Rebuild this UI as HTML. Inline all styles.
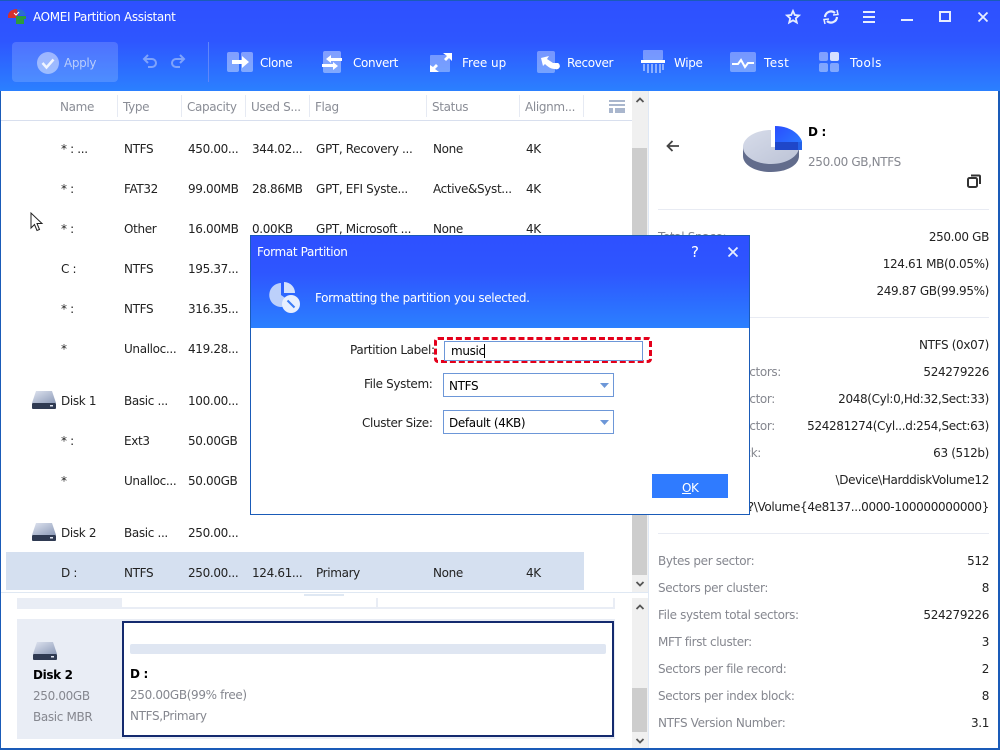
<!DOCTYPE html>
<html><head><meta charset="utf-8"><style>
*{box-sizing:border-box}
html,body{margin:0;padding:0;width:1000px;height:750px;overflow:hidden;background:#fff}
body{position:relative;font:12px/16px "DejaVu Sans","Liberation Sans",sans-serif;letter-spacing:-.35px;color:#222}
.t{position:absolute;white-space:nowrap;margin-top:1px}
.a{position:absolute}
.w{color:#fff}
.h{color:#8a8d96;margin-top:0}
.g{color:#85878f}
.n{margin-top:0}
.r{position:absolute;white-space:nowrap;right:11px;margin-top:1px}
svg{position:absolute;overflow:visible}
</style></head><body>
<div class="a" style="left:0;top:0;width:1000px;height:750px;border:1px solid #1a5bb8;border-width:1px 2px 2px 1px"></div>
<div class="a" style="left:0;top:0;width:1000px;height:91px;background:linear-gradient(#2e50ff 0,#2e56ff 45%,#2b80ff 100%);border-top:1px solid #1a5bb8"></div>
<div class="a" style="left:0;top:91px;width:1px;height:659px;background:#1a5bb8"></div>

<svg style="left:7px;top:8px" width="20" height="17" viewBox="0 0 20 17"><path d="M1 7C2 3 6 1 10 1l1 6-2 3-4 0H1z" fill="#d5302f"/><path d="M10 1c4 0 8 2 9 6h-7z" fill="#2b6fcf"/><path d="M9 8h10v3h-2v5H9z" fill="#2c9a3f"/><path d="M7 5l2 2 3-3" stroke="#fff" fill="none"/></svg>
<span class="t w" style="left:33px;top:8px">AOMEI Partition Assistant</span>

<div class="a" style="left:12px;top:42px;width:106px;height:40px;background:rgba(255,255,255,.16);border-radius:4px"></div>
<svg style="left:37px;top:52px" width="22" height="22"><circle cx="11" cy="11" r="11" fill="#fff" fill-opacity=".45"/><path d="M5.500 11l4 4.500 7-8" stroke="#fff" stroke-opacity=".85" stroke-width="2.500" fill="none"/></svg>
<span class="t" style="left:64px;top:54px;color:#b9cdfb">Apply</span>
<svg style="left:142px;top:54px" width="44" height="14" fill="none" stroke="#7fa3fb" stroke-width="2"><path d="M2 5h8a4 4 0 0 1 0 8H6M6 1L2 5l4 4"/><path d="M42 5h-8a4 4 0 0 0 0 8h4M38 1l4 4-4 4"/></svg>
<div class="a" style="left:208px;top:42px;width:1px;height:40px;background:#5f86fb"></div>

<svg style="left:227px;top:52px" width="26" height="20"><rect width="12" height="20" rx="2" fill="#fff" fill-opacity=".4"/><rect x="14" width="12" height="20" rx="2" fill="#fff" fill-opacity=".4"/><path d="M5 8h10V4l7 6-7 6v-4H5z" fill="#fff"/></svg>
<span class="t w" style="left:260px;top:54px">Clone</span>
<svg style="left:322px;top:51px" width="20" height="22"><rect x="1" width="18" height="22" rx="2" fill="#fff" fill-opacity=".4"/><path d="M20 7H9V4L4 8l5 4V10h11zM0 16h11v3l5-4-5-4v2H0z" fill="#fff"/></svg>
<span class="t w" style="left:353px;top:54px">Convert</span>
<svg style="left:430px;top:53px" width="22" height="19"><rect y="2" width="20" height="17" rx="1" fill="#fff" fill-opacity=".35"/><path d="M13 0h9v8l-3-3-3 3-2-2 3-3zM9 19H0v-7l3 2 3-3 2 2-3 3z" fill="#fff"/></svg>
<span class="t w" style="left:462px;top:54px;letter-spacing:-.05px">Free up</span>
<svg style="left:537px;top:51px" width="22" height="22"><rect width="18" height="22" rx="2" fill="#fff" fill-opacity=".35"/><path d="M4 7l8-2-2 3 6 4h5a3 3 0 0 1-3 6c-4 0-7-2-10-5l-2 2z" fill="#fff"/></svg>
<span class="t w" style="left:567px;top:54px">Recover</span>
<svg style="left:641px;top:50px" width="24" height="24"><rect x="2" width="20" height="10" rx="1" fill="#fff" fill-opacity=".35"/><rect y="10" width="24" height="3" fill="#fff"/><path d="M3 14v7M7 14v9M11 14v9M15 14v9M19 14v9M22 14v6" stroke="#fff" stroke-opacity=".45" stroke-width="2"/></svg>
<span class="t w" style="left:674px;top:54px">Wipe</span>
<svg style="left:730px;top:52px" width="26" height="20"><rect width="26" height="20" rx="2" fill="#fff" fill-opacity=".35"/><path d="M2 12h6l3-4 4 7 3-4h6" stroke="#fff" stroke-width="2" fill="none"/></svg>
<span class="t w" style="left:764px;top:54px;letter-spacing:.4px">Test</span>
<svg style="left:819px;top:52px" width="20" height="20" fill="#fff"><rect width="9" height="9" rx="2" fill-opacity=".4"/><rect x="11" width="9" height="9" rx="2" fill-opacity=".8"/><rect y="11" width="9" height="9" rx="2" fill-opacity=".4"/><rect x="11" y="11" width="9" height="9" rx="2" fill-opacity=".4"/></svg>
<span class="t w" style="left:850px;top:54px;letter-spacing:.45px">Tools</span>

<svg style="left:786px;top:10px" width="14" height="14"><path d="M7 1l1.800 4 4.200.4-3.200 2.900 1 4.200L7 10.300 3.200 12.500l1-4.200L1 5.400 5.200 5z" fill="none" stroke="#e6edff" stroke-width="1.800"/></svg>
<svg style="left:823px;top:9px" width="16" height="16" fill="none" stroke="#e6edff" stroke-width="2.200"><path d="M2 8a6 6 0 0 1 10-4M14 8a6 6 0 0 1-10 4"/><path d="M10 6l5-.5L14 1M6 10l-5 .5L2 15" stroke-width="1.500"/></svg>
<svg style="left:863px;top:11px" width="12" height="12" fill="#e6edff"><rect width="12" height="2"/><rect y="5" width="12" height="2"/><rect y="10" width="12" height="2"/></svg>
<div class="a" style="left:901px;top:19px;width:12px;height:2px;background:#e6edff"></div>
<div class="a" style="left:939px;top:11px;width:12px;height:11px;border:2px solid #e6edff"></div>
<svg style="left:978px;top:12px" width="10" height="10"><path d="M.5.5l9 9M9.500.5l-9 9" stroke="#e6edff" stroke-width="1.800"/></svg>

<!-- list header -->
<div class="a" style="left:1px;top:120px;width:631px;height:1px;background:#d8dfee"></div>
<span class="t h" style="left:60px;top:99px">Name</span><span class="t h" style="left:123px;top:99px">Type</span><span class="t h" style="left:187px;top:99px">Capacity</span><span class="t h" style="left:251px;top:99px">Used S...</span><span class="t h" style="left:315px;top:99px">Flag</span><span class="t h" style="left:432px;top:99px">Status</span><span class="t h" style="left:525px;top:99px">Alignm...</span>
<div class="a" style="left:117px;top:95px;width:1px;height:22px;background:#e6eaf3"></div><div class="a" style="left:181px;top:95px;width:1px;height:22px;background:#e6eaf3"></div><div class="a" style="left:245px;top:95px;width:1px;height:22px;background:#e6eaf3"></div><div class="a" style="left:309px;top:95px;width:1px;height:22px;background:#e6eaf3"></div><div class="a" style="left:426px;top:95px;width:1px;height:22px;background:#e6eaf3"></div><div class="a" style="left:519px;top:95px;width:1px;height:22px;background:#e6eaf3"></div><div class="a" style="left:583px;top:95px;width:1px;height:22px;background:#e6eaf3"></div>
<svg style="left:609px;top:100px" width="16" height="13" fill="#a9b6cd"><rect width="16" height="2"/><rect y="4" width="16" height="2"/><rect y="8" width="4" height="5"/><rect x="6" y="8" width="10" height="5"/></svg>

<!-- scrollbars -->
<div class="a" style="left:632px;top:91px;width:16px;height:501px;background:#f0f0f0"></div>
<div class="a" style="left:632px;top:148px;width:15px;height:427px;background:#cdcdcd"></div>
<div class="a" style="left:648px;top:91px;width:1px;height:657px;background:#dfe8f5"></div>
<svg style="left:636px;top:97px" width="8" height="6"><path d="M.5 5L4 1.500 7.500 5" fill="none" stroke="#555" stroke-width="1.800"/></svg>
<svg style="left:636px;top:581px" width="8" height="6"><path d="M.5 1L4 4.500 7.500 1" fill="none" stroke="#555" stroke-width="1.800"/></svg>
<div class="a" style="left:632px;top:598px;width:16px;height:150px;background:#f0f0f0"></div>
<div class="a" style="left:632px;top:688px;width:15px;height:44px;background:#cdcdcd"></div>
<svg style="left:636px;top:604px" width="8" height="6"><path d="M.5 5L4 1.500 7.500 5" fill="none" stroke="#555" stroke-width="1.800"/></svg>
<svg style="left:636px;top:738px" width="8" height="6"><path d="M.5 1L4 4.500 7.500 1" fill="none" stroke="#555" stroke-width="1.800"/></svg>

<!-- selected -->
<div class="a" style="left:6px;top:552px;width:578px;height:38px;background:#d5e0f0"></div>
<div class="a" style="left:1px;top:592px;width:647px;height:1px;background:#dfe8f3"></div>
<div class="a" style="left:304px;top:594px;width:40px;height:2px;background:#dfe8f3"></div>

<!-- rows -->
<span class="t" style="left:61px;top:140px">* : ...</span><span class="t" style="left:124px;top:140px">NTFS</span><span class="t" style="left:188px;top:140px">450.00...</span><span class="t" style="left:252px;top:140px">344.02...</span><span class="t" style="left:316px;top:140px">GPT, Recovery ...</span><span class="t" style="left:433px;top:140px">None</span><span class="t" style="left:526px;top:140px">4K</span>
<span class="t" style="left:61px;top:180px">* :</span><span class="t" style="left:124px;top:180px">FAT32</span><span class="t" style="left:188px;top:180px">99.00MB</span><span class="t" style="left:252px;top:180px">28.86MB</span><span class="t" style="left:316px;top:180px">GPT, EFI Syste...</span><span class="t" style="left:433px;top:180px">Active&amp;Syst...</span><span class="t" style="left:526px;top:180px">4K</span>
<span class="t" style="left:61px;top:220px">* :</span><span class="t" style="left:124px;top:220px">Other</span><span class="t" style="left:188px;top:220px">16.00MB</span><span class="t" style="left:252px;top:220px">0.00KB</span><span class="t" style="left:316px;top:220px">GPT, Microsoft ...</span><span class="t" style="left:433px;top:220px">None</span><span class="t" style="left:526px;top:220px">4K</span>
<span class="t" style="left:61px;top:260px">C :</span><span class="t" style="left:124px;top:260px">NTFS</span><span class="t" style="left:188px;top:260px">195.37...</span>
<span class="t" style="left:61px;top:300px">* :</span><span class="t" style="left:124px;top:300px">NTFS</span><span class="t" style="left:188px;top:300px">316.35...</span>
<span class="t" style="left:61px;top:340px">*</span><span class="t" style="left:124px;top:340px">Unalloc...</span><span class="t" style="left:188px;top:340px">419.28...</span>
<span class="t" style="left:61px;top:392px">Disk 1</span><span class="t" style="left:124px;top:392px">Basic ...</span><span class="t" style="left:188px;top:392px">100.00...</span>
<span class="t" style="left:61px;top:432px">* :</span><span class="t" style="left:124px;top:432px">Ext3</span><span class="t" style="left:188px;top:432px">50.00GB</span>
<span class="t" style="left:61px;top:472px">*</span><span class="t" style="left:124px;top:472px">Unalloc...</span><span class="t" style="left:188px;top:472px">50.00GB</span>
<span class="t" style="left:61px;top:524px">Disk 2</span><span class="t" style="left:124px;top:524px">Basic ...</span><span class="t" style="left:188px;top:524px">250.00...</span>
<span class="t" style="left:61px;top:564px">D :</span><span class="t" style="left:124px;top:564px">NTFS</span><span class="t" style="left:188px;top:564px">250.00...</span><span class="t" style="left:252px;top:564px">124.61...</span><span class="t" style="left:316px;top:564px">Primary</span><span class="t" style="left:433px;top:564px">None</span><span class="t" style="left:526px;top:564px">4K</span>

<svg style="left:32px;top:391px" width="24" height="18"><defs><linearGradient id="d" x1="0" y1="0" x2="1" y2="1"><stop offset="0" stop-color="#dfe4f0"/><stop offset="1" stop-color="#8d9bb8"/></linearGradient></defs><path d="M4 0h16l4 12H0z" fill="url(#d)"/><rect y="12" width="24" height="6" rx="1" fill="#2f3a52"/><rect x="18" y="14" width="3" height="1.500" fill="#dfe4f0"/></svg>
<svg style="left:32px;top:523px" width="24" height="18"><path d="M4 0h16l4 12H0z" fill="url(#d)"/><rect y="12" width="24" height="6" rx="1" fill="#2f3a52"/><rect x="18" y="14" width="3" height="1.500" fill="#dfe4f0"/></svg>

<svg style="left:30px;top:212px" width="14" height="20"><path d="M1 1v15l3.500-3.500 2.500 6 2.500-1-2.500-6H12z" fill="#fff" stroke="#222" stroke-width="1"/></svg>

<!-- bottom panel -->
<div class="a" style="left:17px;top:598px;width:105px;height:11px;background:#e9edf5"></div>
<div class="a" style="left:122px;top:607px;width:493px;height:2px;background:#e9edf5"></div>
<div class="a" style="left:376px;top:598px;width:2px;height:10px;background:#e9edf5"></div>
<div class="a" style="left:613px;top:598px;width:2px;height:10px;background:#e9edf5"></div>
<div class="a" style="left:17px;top:619px;width:598px;height:120px;background:#e9edf5"></div>
<div class="a" style="left:122px;top:621px;width:492px;height:116px;background:#fff;border:2px solid #142a6e"></div>
<div class="a" style="left:130px;top:644px;width:476px;height:10px;background:#dfe6f2;border-radius:2px"></div>
<svg style="left:33px;top:642px" width="24" height="18"><path d="M4 0h16l4 12H0z" fill="url(#d)"/><rect y="12" width="24" height="6" rx="1" fill="#2f3a52"/><rect x="18" y="14" width="3" height="1.500" fill="#dfe4f0"/></svg>
<span class="t" style="left:33px;top:666px;font-weight:bold;color:#000">Disk 2</span>
<span class="t g" style="left:33px;top:687px">250.00GB</span>
<span class="t g" style="left:33px;top:708px">Basic MBR</span>
<span class="t" style="left:130px;top:665px;font-weight:bold;color:#000">D :</span>
<span class="t g" style="left:130px;top:686px">250.00GB(99% free)</span>
<span class="t g" style="left:130px;top:707px">NTFS,Primary</span>

<!-- right panel -->
<svg style="left:666px;top:140px" width="14" height="12" fill="none" stroke="#444" stroke-width="1.800"><path d="M13 6H1.500M6.500 1L1.500 6l5 5"/></svg>
<svg style="left:743px;top:126px" width="62" height="48"><defs><linearGradient id="p" x1="0" y1="0" x2="1" y2="1"><stop offset="0" stop-color="#d7dcea"/><stop offset="1" stop-color="#bcc3d6"/></linearGradient><linearGradient id="b" x1="0" y1="0" x2="1" y2="1"><stop offset="0" stop-color="#2a4dff"/><stop offset="1" stop-color="#2b80ff"/></linearGradient></defs><path d="M0 21v9c0 9 12 16 28 16s28-7 28-16v-9z" fill="#626c8c"/><path d="M28 4C12 4 0 12 0 21s12 17 28 17 28-8 28-17c0-2-1-4-2-4v4H28z" fill="url(#p)"/><path d="M32 0c13 0 23 6 27 15v9H32z" fill="url(#b)"/><path d="M32 16h27v8H32z" fill="#1f47c9"/><path d="M55 16h4v8h-4z" fill="#2462e8"/></svg>
<span class="t n" style="left:808px;top:124px;font-weight:bold;color:#000">D :</span>
<span class="t g n" style="left:808px;top:154px">250.00 GB,NTFS</span>
<svg style="left:967px;top:174px" width="14" height="14" fill="none" stroke="#333" stroke-width="2"><rect x="1" y="4" width="9" height="9" rx="1.500"/><path d="M4 1.500h8a1 1 0 0 1 1 1V10"/></svg>
<div class="a" style="left:658px;top:209px;width:331px;height:1px;background:#e8ebf3"></div>
<div class="a" style="left:658px;top:317px;width:331px;height:1px;background:#e8ebf3"></div>
<div class="a" style="left:658px;top:533px;width:331px;height:1px;background:#e8ebf3"></div>

<span class="t g" style="left:658px;top:228px">Total Space:</span><span class="r" style="top:228px">250.00 GB</span>
<span class="r" style="top:255px">124.61 MB(0.05%)</span>
<span class="r" style="top:282px">249.87 GB(99.95%)</span>
<span class="r" style="top:336px">NTFS (0x07)</span>
<span class="r g" style="top:363px;right:219px">Sectors:</span><span class="r" style="top:363px">524279226</span>
<span class="r g" style="top:390px;right:225px">Sector:</span><span class="r" style="top:390px">2048(Cyl:0,Hd:32,Sect:33)</span>
<span class="r g" style="top:417px;right:225px">Sector:</span><span class="r" style="top:417px">524281274(Cyl...d:254,Sect:63)</span>
<span class="r g" style="top:444px;right:239px">Track:</span><span class="r" style="top:444px">63 (512b)</span>
<span class="r" style="top:471px">\Device\HarddiskVolume12</span>
<span class="r" style="top:498px">\\?\Volume{4e8137...0000-100000000000}</span>
<span class="t g" style="left:658px;top:552px">Bytes per sector:</span><span class="r" style="top:552px">512</span>
<span class="t g" style="left:658px;top:579px">Sectors per cluster:</span><span class="r" style="top:579px">8</span>
<span class="t g" style="left:658px;top:606px">File system total sectors:</span><span class="r" style="top:606px">524279226</span>
<span class="t g" style="left:658px;top:633px">MFT first cluster:</span><span class="r" style="top:633px">3</span>
<span class="t g" style="left:658px;top:660px">Sectors per file record:</span><span class="r" style="top:660px">2</span>
<span class="t g" style="left:658px;top:687px">Sectors per index block:</span><span class="r" style="top:687px">8</span>
<span class="t g" style="left:658px;top:714px">NTFS Version Number:</span><span class="r" style="top:714px">3.1</span>

<!-- dialog -->
<div class="a" style="left:250px;top:235px;width:500px;height:280px;background:#fff;border:1px solid #1a5bb8"></div>
<div class="a" style="left:251px;top:236px;width:498px;height:92px;background:linear-gradient(#2e50ff 0,#2e56ff 40%,#2b80ff 100%)"></div>
<span class="t w n" style="left:257px;top:244px">Format Partition</span>
<span class="t w n" style="left:691px;top:244px;font-size:15px;letter-spacing:0">?</span>
<svg style="left:728px;top:247px" width="10" height="10"><path d="M.5.5l9 9M9.500.5l-9 9" stroke="#e6edff" stroke-width="1.800"/></svg>
<svg style="left:269px;top:281px" width="33" height="33"><path d="M12 2a12 12 0 1 0 10 19l-10-7z" fill="#bcd0fb"/><path d="M15 1a11 11 0 0 1 11 11H15z" fill="#d4e1fd"/><circle cx="22" cy="23" r="9" fill="#e8effe"/><path d="M18.500 19.500l7 7" stroke="#3b7bf6" stroke-width="2"/></svg>
<span class="t w" style="left:315px;top:289px">Formatting the partition you selected.</span>

<span class="t n" style="left:350px;top:342px">Partition Label:</span>
<div class="a" style="left:434px;top:337px;width:218px;height:26px;border:3px dashed #e4001b;border-radius:4px"></div>
<div class="a" style="left:444px;top:341px;width:199px;height:20px;border:1px solid #6d97d8"></div>
<span class="t n" style="left:451px;top:343px;color:#000">music</span>
<div class="a" style="left:484px;top:344px;width:1px;height:14px;background:#000"></div>
<span class="t n" style="left:364px;top:376px">File System:</span>
<div class="a" style="left:443px;top:373px;width:171px;height:24px;border:1px solid #6d97d8"></div>
<span class="t" style="left:449px;top:377px;color:#000">NTFS</span>
<svg style="left:600px;top:383px" width="9" height="5"><path d="M0 0h9L4.500 5z" fill="#6d97d8"/></svg>
<span class="t" style="left:362px;top:414px">Cluster Size:</span>
<div class="a" style="left:443px;top:410px;width:171px;height:24px;border:1px solid #6d97d8"></div>
<span class="t" style="left:449px;top:414px;color:#000">Default (4KB)</span>
<svg style="left:600px;top:420px" width="9" height="5"><path d="M0 0h9L4.500 5z" fill="#6d97d8"/></svg>
<div class="a" style="left:652px;top:474px;width:76px;height:24px;background:#2f7bff"></div>
<span class="t w" style="left:682px;top:479px;text-decoration:underline;text-decoration-thickness:1px">O</span><span class="t w" style="left:691px;top:479px">K</span>
</body></html>
